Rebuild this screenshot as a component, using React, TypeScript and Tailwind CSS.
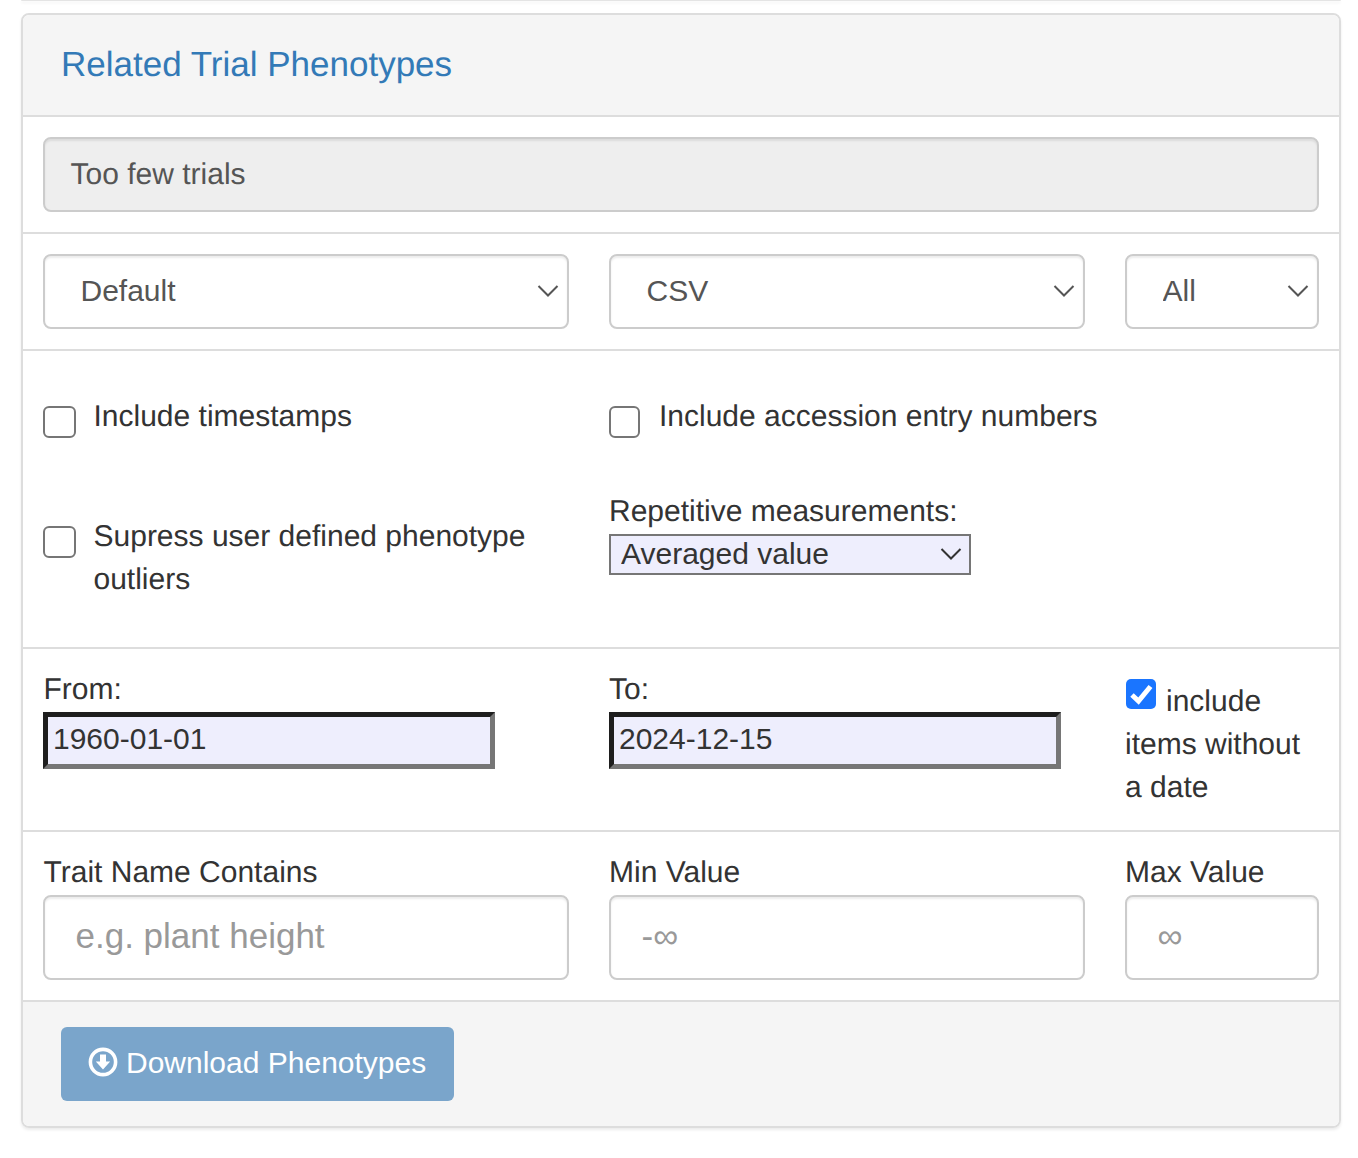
import React from "react";

const font = { fontFamily: '"Liberation Sans", Arial, sans-serif' };

function Chevron({ color = "#555", cls }: { color?: string; cls: string }) {
  return (
    <svg viewBox="0 0 22 14" className={`pointer-events-none absolute h-[14px] w-[22px] ${cls}`}>
      <path d="M1.500 2 L11 11.500 L20.500 2" fill="none" stroke={color} strokeWidth="2" />
    </svg>
  );
}

function Sel({ value, cls }: { value: string; cls: string }) {
  return (
    <div className={`relative h-[75px] ${cls}`}>
      <select
        defaultValue={value}
        className="h-[75px] w-full appearance-none rounded-[8px] border-2 border-[#ccc] bg-white pl-[35.5px] pr-[4px] pb-[2px] text-[30px] text-[#555] shadow-[inset_0_2px_2px_rgba(0,0,0,0.075)] outline-none"
      >
        <option>{value}</option>
      </select>
      <Chevron cls="right-[10px] top-[30px]" />
    </div>
  );
}

function Tx({ ph }: { ph: string }) {
  return (
    <input
      placeholder={ph}
      className="mt-[1px] block h-[85px] w-full rounded-[8px] border-2 border-[#ccc] bg-white px-[30.5px] pb-[3px] text-[35px] text-[#555] placeholder:text-[#999] shadow-[inset_0_2px_2px_rgba(0,0,0,0.075)] outline-none"
    />
  );
}

function DateBox({ value }: { value: string }) {
  return (
    <input
      defaultValue={value}
      className="block h-[57px] w-[452px] border-[5px] border-t-[#1e1e1e] border-l-[#1e1e1e] border-r-[#767676] border-b-[#767676] bg-[#eeeefd] pl-[5px] pb-[4px] text-[30px] text-[#333] outline-none"
    />
  );
}

function Box({ w }: { w: string }) {
  return (
    <input
      type="checkbox"
      className={`m-0 mt-[11px] h-[32px] shrink-0 appearance-none rounded-[6px] border-[2.5px] border-[#767676] bg-white ${w}`}
    />
  );
}

export default function App() {
  return (
    <div style={font} className="h-[1158px] overflow-hidden bg-white text-[30px] text-[#333] [text-rendering:geometricPrecision]">
      <div className="ml-[21px] mr-[17px] h-[1px] rounded-b-[8px] bg-[#e4e4e4] shadow-[0_2px_3px_rgba(0,0,0,0.08)]" />
      <div className="ml-[21px] mr-[17px] mt-[12px] h-[1115px] overflow-hidden rounded-[8px] border-2 border-[#ddd] shadow-[0_2px_3px_rgba(0,0,0,0.08)]">
        <div className="flex h-[102px] items-center border-b-2 border-[#ddd] bg-[#f5f5f5] pl-[38px]">
          <h3 className="text-[35px] leading-[38px] font-normal text-[#337ab7]">Related Trial Phenotypes</h3>
        </div>

        <div className="h-[117px] border-b-2 border-[#ddd] px-[20px] py-[20px]">
          <div className="flex h-[75px] items-center rounded-[8px] border-2 border-[#ccc] bg-[#eee] pl-[25.5px] text-[#555] shadow-[inset_0_2px_2px_rgba(0,0,0,0.075)]">
            Too few trials
          </div>
        </div>

        <div className="flex h-[117px] gap-[40px] border-b-2 border-[#ddd] px-[20px] pt-[20px]">
          <Sel value="Default" cls="w-[526px]" />
          <Sel value="CSV" cls="w-[476px]" />
          <Sel value="All" cls="w-[194px]" />
        </div>

        <div className="flex h-[298px] gap-[40px] border-b-2 border-[#ddd] px-[20px]">
          <div className="w-[526px]">
            <label className="mt-[44px] flex">
              <Box w="w-[33px]" />
              <span className="ml-[17.5px] leading-[43px]">Include timestamps</span>
            </label>
            <label className="mt-[77px] flex">
              <Box w="w-[33px]" />
              <span className="ml-[17.5px] leading-[43px]">Supress user defined phenotype outliers</span>
            </label>
          </div>
          <div className="w-[700px]">
            <label className="mt-[44px] flex">
              <Box w="w-[31px]" />
              <span className="ml-[19px] leading-[43px]">Include accession entry numbers</span>
            </label>
            <div className="mt-[52px] leading-[43px]">Repetitive measurements:</div>
            <div className="relative mt-[1px] h-[41px] w-[362px]">
              <select
                defaultValue="Averaged value"
                className="block h-[41px] w-full appearance-none border-2 border-[#767676] bg-[#eeeefd] pb-[2px] pl-[10px] text-[30px] leading-[34px] text-[#333] outline-none"
              >
                <option>Averaged value</option>
              </select>
              <Chevron color="#333" cls="right-[9px] top-[13px]" />
            </div>
          </div>
        </div>

        <div className="flex h-[183px] gap-[40px] border-b-2 border-[#ddd] px-[20px]">
          <div className="w-[526px] pt-[19px]">
            <div className="mb-[1px] pl-[0.5px] leading-[43px]">From:</div>
            <DateBox value="1960-01-01" />
          </div>
          <div className="w-[476px] pt-[19px]">
            <div className="mb-[1px] leading-[43px]">To:</div>
            <DateBox value="2024-12-15" />
          </div>
          <label className="relative block w-[194px] pt-[30px] leading-[43px]">
            <span className="relative ml-[1px] mr-[10px] inline-block h-[30px] w-[30px] align-[2px]">
              <input type="checkbox" defaultChecked className="m-0 block h-[30px] w-[30px] appearance-none rounded-[5px] bg-[#1a75ff]" />
              <svg viewBox="0 0 30 30" className="pointer-events-none absolute inset-0 h-[30px] w-[30px]">
                <path d="M6 16 L12.500 22 L24.500 7.500" fill="none" stroke="#fff" strokeWidth="5" />
              </svg>
            </span>
            include items without a date
          </label>
        </div>

        <div className="flex h-[170px] gap-[40px] border-b-2 border-[#ddd] px-[20px] pt-[19px]">
          <div className="w-[526px]">
            <div className="pl-[0.5px] leading-[43px]">Trait Name Contains</div>
            <Tx ph="e.g. plant height" />
          </div>
          <div className="w-[476px]">
            <div className="leading-[43px]">Min Value</div>
            <Tx ph="-∞" />
          </div>
          <div className="w-[194px]">
            <div className="leading-[43px]">Max Value</div>
            <Tx ph="∞" />
          </div>
        </div>

        <div className="h-[124px] bg-[#f5f5f5] pl-[38px] pt-[25px]">
          <button className="flex h-[74px] w-[393px] items-center rounded-[6px] bg-[#7aa5cb] pb-[3px] pl-[27px] text-[30px] text-white">
            <svg viewBox="0 0 30 30" className="mr-[8px] h-[30px] w-[30px] shrink-0 -translate-y-[1px]">
              <circle cx="15" cy="15" r="12.600" fill="none" stroke="currentColor" strokeWidth="3.600" />
              <path d="M12 7.500h6v7h4.200L15 22.500 7.800 14.500H12z" fill="currentColor" />
            </svg>
            Download Phenotypes
          </button>
        </div>
      </div>
    </div>
  );
}
